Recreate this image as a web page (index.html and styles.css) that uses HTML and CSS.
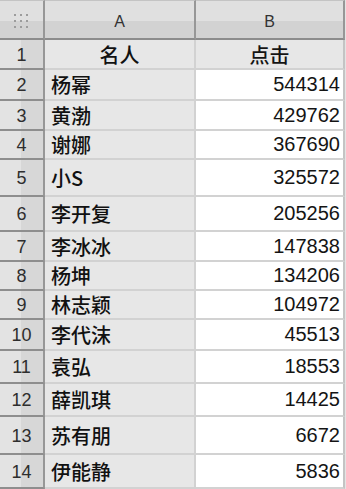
FILE: index.html
```html
<!DOCTYPE html>
<html lang="zh">
<head>
<meta charset="utf-8">
<title>Sheet</title>
<link rel="stylesheet" href="styles.css">
</head>
<body>
<div class="sheet">
  <div class="row head">
    <div class="cell corner">
      <svg width="16" height="16" viewBox="0 0 16 16" aria-hidden="true">
        <g fill="#9c9c9c">
          <rect x="0" y="0" width="2" height="2"/><rect x="6" y="0" width="2" height="2"/><rect x="12" y="0" width="2" height="2"/>
          <rect x="0" y="6" width="2" height="2"/><rect x="6" y="6" width="2" height="2"/><rect x="12" y="6" width="2" height="2"/>
          <rect x="0" y="12" width="2" height="2"/><rect x="6" y="12" width="2" height="2"/><rect x="12" y="12" width="2" height="2"/>
        </g>
      </svg>
    </div>
    <div class="cell colh col-a">A</div>
    <div class="cell colh col-b">B</div>
  </div>
  <div class="row h30"><div class="cell num">1</div><div class="cell a title">名人</div><div class="cell b title">点击</div></div>
  <div class="row h31"><div class="cell num">2</div><div class="cell a">杨幂</div><div class="cell b">544314</div></div>
  <div class="row h30"><div class="cell num">3</div><div class="cell a">黄渤</div><div class="cell b">429762</div></div>
  <div class="row h29"><div class="cell num">4</div><div class="cell a">谢娜</div><div class="cell b">367690</div></div>
  <div class="row h37"><div class="cell num">5</div><div class="cell a">小S</div><div class="cell b">325572</div></div>
  <div class="row h35"><div class="cell num">6</div><div class="cell a">李开复</div><div class="cell b">205256</div></div>
  <div class="row h30"><div class="cell num">7</div><div class="cell a">李冰冰</div><div class="cell b">147838</div></div>
  <div class="row h29"><div class="cell num">8</div><div class="cell a">杨坤</div><div class="cell b">134206</div></div>
  <div class="row h29"><div class="cell num">9</div><div class="cell a">林志颖</div><div class="cell b">104972</div></div>
  <div class="row h31"><div class="cell num">10</div><div class="cell a">李代沫</div><div class="cell b">45513</div></div>
  <div class="row h33"><div class="cell num">11</div><div class="cell a">袁弘</div><div class="cell b">18553</div></div>
  <div class="row h33"><div class="cell num">12</div><div class="cell a">薛凯琪</div><div class="cell b">14425</div></div>
  <div class="row h38"><div class="cell num">13</div><div class="cell a">苏有朋</div><div class="cell b">6672</div></div>
  <div class="row h34"><div class="cell num">14</div><div class="cell a">伊能静</div><div class="cell b">5836</div></div>
</div>
</body>
</html>
```
FILE: styles.css
```css
* {
  box-sizing: border-box;
  margin: 0;
  padding: 0;
}

html, body {
  width: 346px;
  height: 489px;
  overflow: hidden;
}

body {
  margin: 0;
  background: #e4e4e4;
  font-family: "Liberation Sans", Arial, sans-serif;
}

.sheet {
  width: 345px;
  display: flex;
  flex-direction: column;
}

.row {
  display: flex;
  flex: none;
}

.head { height: 40px; }
.h29 { height: 29px; }
.h30 { height: 30px; }
.h31 { height: 31px; }
.h33 { height: 33px; }
.h34 { height: 34px; }
.h35 { height: 35px; }
.h37 { height: 37px; }
.h38 { height: 38px; }

.cell {
  display: flex;
  align-items: center;
  border-right: 2px solid #d2d2d2;
  border-bottom: 2px solid #d2d2d2;
  white-space: nowrap;
  overflow: hidden;
}

/* header row */
.head .cell {
  background: linear-gradient(#e0e0e0 0, #e0e0e0 55%, #d2d2d2 55%, #d2d2d2 100%);
  border-right-color: #979797;
  border-bottom-color: #8c8c8c;
  border-top: 1px solid #c4c4c4;
}

.corner {
  width: 45px;
  justify-content: center;
  padding-top: 5px;
  padding-left: 1px;
}

.corner svg {
  display: block;
}

.colh {
  justify-content: center;
  font-size: 16px;
  color: #333;
  padding-top: 5px;
}

.col-a { width: 151px; }
.col-b { width: 149px; }

/* row header column */
.num {
  width: 45px;
  justify-content: center;
  background: linear-gradient(to right, #e3e3e3 0, #e3e3e3 48%, #d7d7d7 48%, #d7d7d7 100%);
  border-right-color: #979797;
  border-bottom-color: #8e8e8e;
  font-size: 18px;
  color: #2e2e2e;
  padding-top: 2px;
}

.a {
  width: 151px;
  background: #e7e7e7;
  padding-left: 6px;
  font-family: "Noto Sans CJK SC", "Liberation Sans", sans-serif;
  font-weight: 500;
  font-size: 20px;
  color: #111;
}

.b {
  width: 149px;
  background: #fff;
  justify-content: flex-end;
  padding-right: 3px;
  font-size: 20px;
  color: #141414;
  border-right-color: #c4c4c4;
}

.title {
  justify-content: center;
  padding-left: 0;
  padding-right: 0;
  font-family: "Noto Sans CJK SC", "Liberation Sans", sans-serif;
  font-weight: 500;
}

.b.title {
  background: #e7e7e7;
}
```
